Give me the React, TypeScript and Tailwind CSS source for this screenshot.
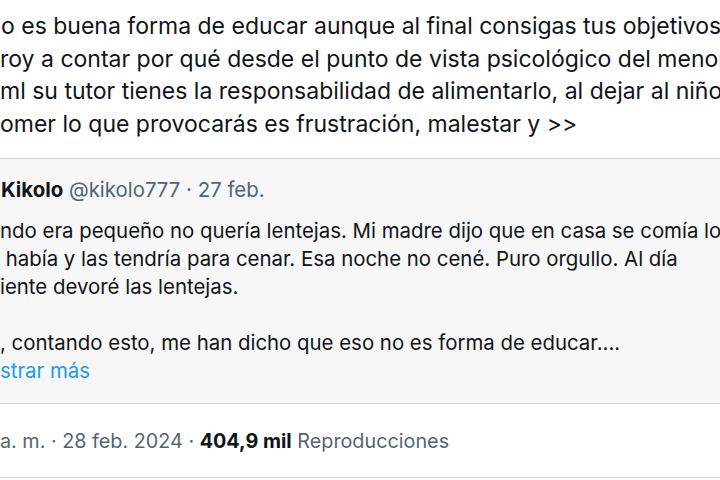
const mainLines = [
  { text: "o es buena forma de educar aunque al final consigas tus objetivos", pad: "pl-[1px]" },
  { text: "roy a contar por qué desde el punto de vista psicológico del menor", pad: "pl-0" },
  { text: "ml su tutor tienes la responsabilidad de alimentarlo, al dejar al niño", pad: "pl-0" },
  { text: "omer lo que provocarás es frustración, malestar y >>", pad: "pl-0" },
];

const quoteLines = [
  "ndo era pequeño no quería lentejas. Mi madre dijo que en casa se comía lo",
  " había y las tendría para cenar. Esa noche no cené. Puro orgullo. Al día",
  "iente devoré las lentejas.",
  " ",
  ", contando esto, me han dicho que eso no es forma de educar....",
];

function QuotedTweet() {
  return (
    <div className="mt-[18px] border-y border-[#cfd9de] bg-[#f7f7f7] pt-[17px] pb-[18px]">
      <div className="whitespace-pre pl-[1px] text-[20.4px] leading-[27.5px]">
        <span className="font-bold text-[#0f1419]">Kikolo</span>
        <span className="text-[#536471]"> @kikolo777 · 27 feb.</span>
      </div>
      <div className="mt-[13px] text-[20.4px] leading-[28px] text-[#0f1419]">
        {quoteLines.map((line, i) => (
          <div key={i} className="whitespace-pre">
            {line}
          </div>
        ))}
        <div className="whitespace-pre text-[#1d9bf0]">strar más</div>
      </div>
    </div>
  );
}

export default function App() {
  return (
    <div
      className="w-[720px] h-[480px] overflow-hidden bg-white"
      style={{ fontFamily: "Inter, 'Liberation Sans', sans-serif" }}
    >
      <div className="pt-[10px] text-[23px] leading-[32.5px] text-[#0f1419]">
        {mainLines.map((l, i) => (
          <div key={i} className={`whitespace-pre ${l.pad}`}>
            {l.text}
          </div>
        ))}
      </div>
      <QuotedTweet />
      <div className="h-[74px] border-b border-[#cfd9de] pt-[24px] text-[19.8px] leading-[27.5px] text-[#536471] whitespace-pre">
        a. m. · 28 feb. 2024 · <span className="font-bold text-[#0f1419]">404,9 mil</span> Reproducciones
      </div>
    </div>
  );
}
